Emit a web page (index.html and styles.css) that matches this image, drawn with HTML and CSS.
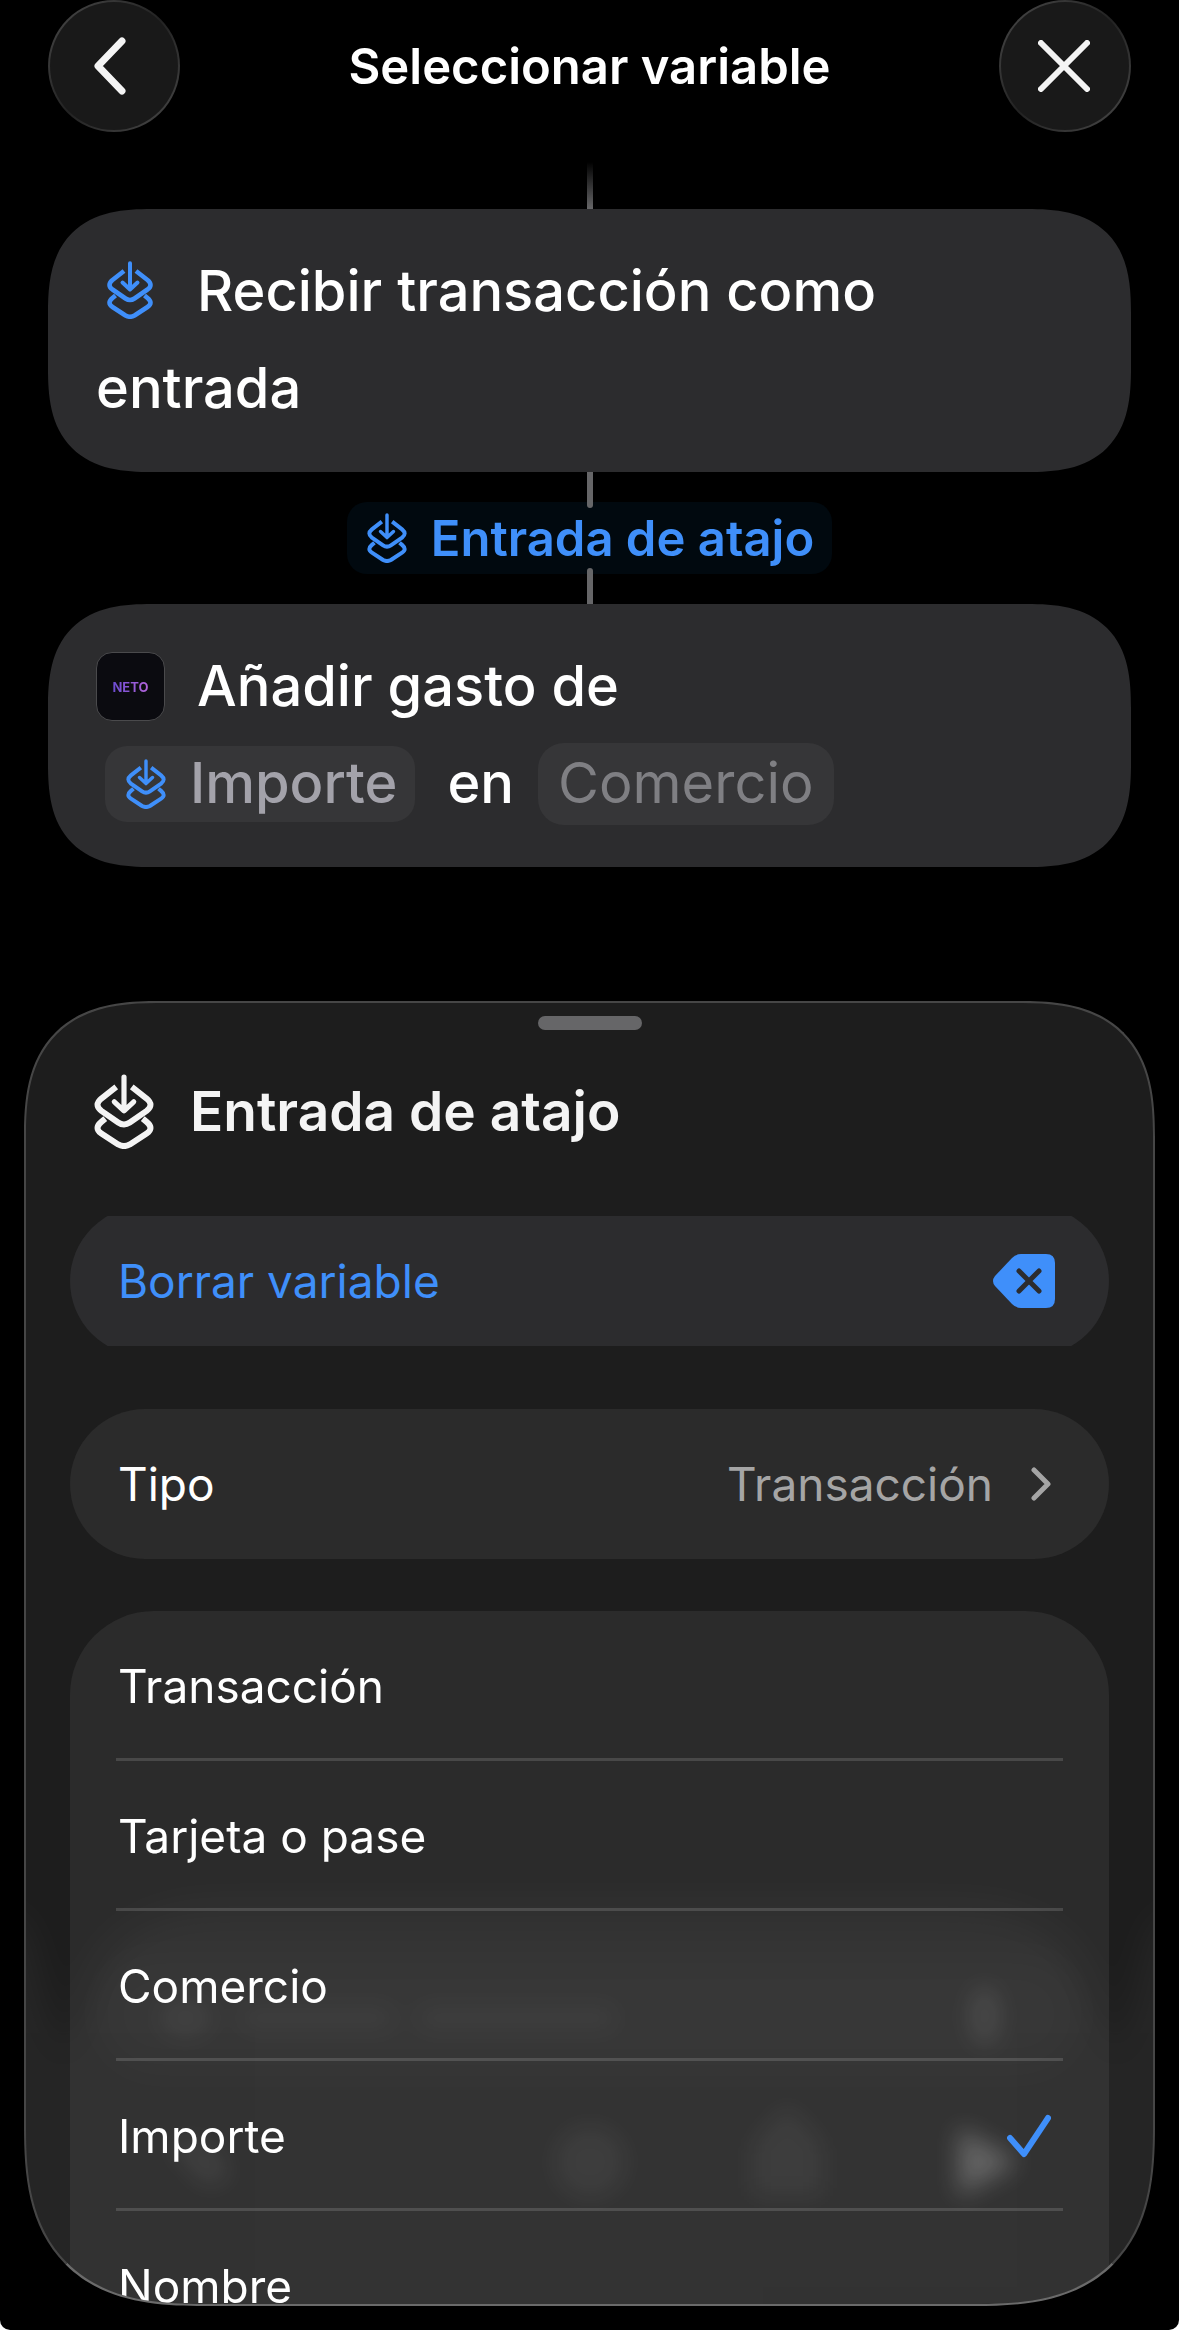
FILE: index.html
```html
<!DOCTYPE html>
<html lang="es">
<head>
  <meta charset="utf-8">
  <meta name="viewport" content="width=device-width, initial-scale=1">
  <title>Seleccionar variable</title>
  <link rel="stylesheet" href="styles.css">
</head>
<body>
  <!-- Shared icon, used in four places -->
  <svg class="sprite" aria-hidden="true">
    <symbol id="icon-input" viewBox="0 0 46 58">
      <g fill="none" stroke="currentColor" stroke-width="4.6" stroke-linejoin="round">
        <path d="M17 10L5.500 19Q-0.500 24 5.500 28.500L18.500 37.500Q23 40.500 27.500 37.500L40.500 28.500Q46.500 24 40.500 19L29 10"/>
        <path d="M8.500 34.500L5.500 37Q-0.500 42 5.500 46L18.500 54.500Q23 57 27.500 54.500L40.500 46Q46.500 42 40.500 37L37.500 34.500"/>
        <path d="M23 2.300V28M15.500 21.500L23 28.500L30.500 21.500" stroke-width="4" stroke-linecap="round"/>
      </g>
    </symbol>
  </svg>

  <div class="screen">
    <header class="header">
      <button class="round-button" type="button" aria-label="Atrás">
        <svg width="34" height="60" viewBox="0 0 34 60"><path d="M29 5L5 30L29 55"/></svg>
      </button>
      <h1>Seleccionar variable</h1>
      <button class="round-button close" type="button" aria-label="Cerrar">
        <svg width="52" height="52" viewBox="0 0 52 52"><path d="M3 3L49 49M49 3L3 49"/></svg>
      </button>
    </header>

    <main class="workflow">
      <div class="line line-start"></div>
      <section class="action">
        <p><svg class="action-icon"><use href="#icon-input"/></svg>Recibir transacción como entrada</p>
      </section>

      <div class="output">
        <div class="line"></div>
        <button class="output-chip" type="button">
          <svg class="chip-icon"><use href="#icon-input"/></svg>
          Entrada de atajo
        </button>
        <div class="line"></div>
      </div>

      <section class="action">
        <div class="action-row">
          <span class="app-icon"><span>NETO</span></span>
          <span>Añadir gasto de</span>
        </div>
        <div class="action-row">
          <button class="token" type="button">
            <svg class="chip-icon"><use href="#icon-input"/></svg>
            Importe
          </button>
          <span>en</span>
          <button class="token empty" type="button">Comercio</button>
        </div>
      </section>
    </main>

    <section class="sheet">
      <!-- Toolbar showing through the glass -->
      <svg class="glass" viewBox="0 0 1131 460" preserveAspectRatio="none" aria-hidden="true">
        <defs>
          <filter id="soft" filterUnits="userSpaceOnUse" x="-200" y="-100" width="1531" height="760"><feGaussianBlur stdDeviation="18"/></filter>
          <filter id="blur" filterUnits="userSpaceOnUse" x="-200" y="-100" width="1531" height="760"><feGaussianBlur stdDeviation="12"/></filter>
        </defs>
        <path d="M-80 40L0 80L36 220L60 150Q80 66 190 62H940Q1050 66 1071 150L1095 220L1131 80L1211 40V560H-80Z" fill="#fff" opacity="0.04" filter="url(#soft)"/>
        <rect x="70" y="110" width="990" height="120" rx="60" fill="#fff" opacity="0.015" filter="url(#soft)"/>
        <g fill="#fff" filter="url(#blur)">
          <ellipse cx="160" cy="174" rx="28" ry="20" opacity="0.05"/>
          <rect x="212" y="160" width="160" height="28" rx="14" opacity="0.035"/>
          <rect x="390" y="160" width="205" height="28" rx="14" opacity="0.035"/>
          <ellipse cx="962" cy="172" rx="16" ry="30" opacity="0.09"/>
          <path d="M140 298Q200 290 204 334L180 342Z" opacity="0.07"/>
          <circle cx="566" cy="318" r="36" opacity="0.05"/>
          <path d="M764 260L800 300V352H728V300Z" opacity="0.05"/>
          <path d="M936 284L996 318L936 352Z" opacity="0.24"/>
        </g>
      </svg>

      <div class="grabber"></div>
      <div class="sheet-title">
        <svg class="title-icon"><use href="#icon-input"/></svg>
        <h2>Entrada de atajo</h2>
      </div>

      <button class="row clear" type="button">
        Borrar variable
        <svg width="62" height="54" viewBox="0 0 62 54">
          <path fill="#3f8ffa" d="M28 0H53Q62 0 62 9V45Q62 54 53 54H28Q23 54 19 50L2 32Q-2 27 2 22L19 4Q23 0 28 0Z"/>
          <path d="M26 17L46 37M46 17L26 37" stroke="#2c2c2e" stroke-width="5" stroke-linecap="round"/>
        </svg>
      </button>

      <button class="row type" type="button">
        Tipo
        <span class="value">
          Transacción
          <svg width="20" height="34" viewBox="0 0 20 34"><path d="M3 3L17 17L3 31"/></svg>
        </span>
      </button>

      <div class="options">
        <label><input type="radio" name="property">Transacción</label>
        <label><input type="radio" name="property">Tarjeta o pase</label>
        <label><input type="radio" name="property">Comercio</label>
        <label>
          <input type="radio" name="property" checked>Importe
          <svg class="check" width="44" height="44" viewBox="0 0 44 44"><path d="M3 24L17 40L41 4"/></svg>
        </label>
        <label><input type="radio" name="property">Nombre</label>
      </div>
    </section>
  </div>
</body>
</html>
```

FILE: styles.css
```css
* {
  box-sizing: border-box;
}
html {
  background-color: #fff;
}
body {
  margin: 0;
  font-family: Inter, "Liberation Sans", sans-serif;
  color: #fff;
}
h1, h2, p {
  margin: 0;
}
button {
  padding: 0;
  border: none;
  background: none;
  color: inherit;
  font: inherit;
  cursor: pointer;
}
svg {
  flex-shrink: 0;
}
.sprite {
  display: none;
}
.screen {
  display: flex;
  flex-direction: column;
  height: 100vh;
  padding-bottom: 24px;
  border-radius: 0 0 10px 10px;
  background-color: #000;
}

/* Header */
.header {
  display: flex;
  justify-content: space-between;
  align-items: center;
  padding: 0 48px;
}
.header h1 {
  font-size: 49px;
  font-weight: 600;
}
.round-button {
  display: flex;
  justify-content: center;
  align-items: center;
  width: 132px;
  height: 132px;
  padding-right: 8px;
  border-radius: 50%;
  border: 2px solid transparent;
  background: linear-gradient(#191919, #191919) padding-box,
    linear-gradient(135deg, #4a4a4a, #222 50%, #4a4a4a) border-box;
}
.round-button.close {
  padding-right: 2px;
}
.round-button path {
  fill: none;
  stroke: #f4f4f4;
  stroke-width: 7;
  stroke-linecap: round;
  stroke-linejoin: round;
}
.round-button.close path {
  stroke-width: 6;
}

/* Actions */
.workflow {
  display: flex;
  flex-direction: column;
  padding: 30px 48px 0;
}
.line {
  width: 6px;
  height: 36px;
  margin: 0 auto;
  background-color: #666668;
}
.line-start {
  height: 47px;
  background: linear-gradient(#000, #666668);
}
.action {
  padding: 34px 48px 35px;
  border-radius: 84px;
  background-color: #2c2c2e;
  font-size: 56px;
  font-weight: 500;
  line-height: 97px;
}
.action-icon {
  width: 46px;
  height: 58px;
  margin: 0 44px 0 11px;
  color: #3f8ffa;
  vertical-align: -8px;
}
.action-row {
  display: flex;
  align-items: center;
  height: 97px;
  gap: 32px;
}
.app-icon {
  display: flex;
  justify-content: center;
  align-items: center;
  width: 69px;
  height: 69px;
  border-radius: 16px;
  border: 1px solid #4a4a4c;
  background-color: #0b0b10;
  font-size: 13px;
  font-weight: 700;
  line-height: 16px;
}
.app-icon span {
  background: linear-gradient(90deg, #6a4bd0, #b565dc);
  background-clip: text;
  -webkit-background-clip: text;
  color: transparent;
}
.output {
  display: flex;
  flex-direction: column;
  align-items: center;
  height: 132px;
}
.output-chip {
  display: flex;
  align-items: center;
  gap: 24px;
  height: 72px;
  margin: -6px 0;
  padding: 0 18px 0 20px;
  border-radius: 20px;
  background-color: #01090f;
  color: #3f8ffa;
  font-size: 49px;
  font-weight: 600;
}
.output .line {
  z-index: 1;
  border-radius: 0 0 3px 3px;
}
.output .line:last-child {
  border-radius: 3px 3px 0 0;
}
.chip-icon {
  width: 40px;
  height: 50px;
  color: #3f8ffa;
}
.token {
  display: flex;
  align-items: center;
  gap: 24px;
  height: 76px;
  margin-left: 9px;
  padding: 0 18px 0 21px;
  border-radius: 22px;
  background-color: #363638;
  color: #a3a2aa;
}
.token.empty {
  height: 82px;
  margin-left: -8px;
  padding: 0 20px;
  border-radius: 26px;
  color: #7f7f83;
  font-weight: 400;
}

/* Bottom sheet */
.sheet {
  position: relative;
  flex: 1;
  min-height: 0;
  margin: 134px 24px 0;
  padding: 13px 44px 0;
  overflow: hidden;
  border: 2px solid #464646;
  border-bottom-color: #6a6a6a;
  border-radius: 112px 112px 140px 140px;
  background-color: #1d1d1d;
  font-size: 46px;
}
.glass {
  position: absolute;
  left: 0;
  bottom: 0;
  width: 100%;
  height: 460px;
}
.grabber {
  width: 104px;
  height: 14px;
  margin: 0 auto;
  border-radius: 7px;
  background-color: #666668;
}
.sheet-title {
  display: flex;
  align-items: center;
  gap: 36px;
  height: 162px;
  margin-bottom: 14px;
  padding-left: 24px;
  color: #f4f4f4;
}
.sheet-title h2 {
  font-size: 55px;
  font-weight: 600;
}
.title-icon {
  width: 60px;
  height: 75px;
}
.row {
  position: relative;
  display: flex;
  justify-content: space-between;
  align-items: center;
  width: 100%;
  height: 150px;
  padding: 0 54px 0 48px;
  border-radius: 75px;
  background-color: #2b2b2b;
}
.clear {
  margin-bottom: 53px;
  background-color: #2c2c2e;
  color: #3f8ffa;
  clip-path: inset(10px 0);
}
.type {
  margin-bottom: 52px;
  padding-right: 58px;
}
.value {
  display: flex;
  align-items: center;
  gap: 38px;
  color: #a5a5a5;
}
.value path,
.check path {
  fill: none;
  stroke: #a5a5a5;
  stroke-width: 5;
  stroke-linecap: round;
  stroke-linejoin: round;
}
.options {
  position: relative;
  padding: 0 46px;
  border-radius: 84px 84px 0 0;
  background-color: rgba(255, 255, 255, 0.064);
}
.options label {
  display: flex;
  align-items: center;
  height: 150px;
  padding: 3px 12px 0 2px;
  border-bottom: 3px solid rgba(255, 255, 255, 0.14);
  cursor: pointer;
}
.options input {
  appearance: none;
  width: 0;
  margin: 0;
}
.check {
  margin-left: auto;
}
.check path {
  stroke: #3f8ffa;
  stroke-width: 6;
}

/* Smooth iOS corners */
@supports (corner-shape: superellipse(1.4)) {
  .action {
    border-radius: 104px;
    corner-shape: superellipse(1.4);
  }
  .sheet {
    border-radius: 136px 136px 180px 180px;
    corner-shape: superellipse(1.4);
  }
}
```
